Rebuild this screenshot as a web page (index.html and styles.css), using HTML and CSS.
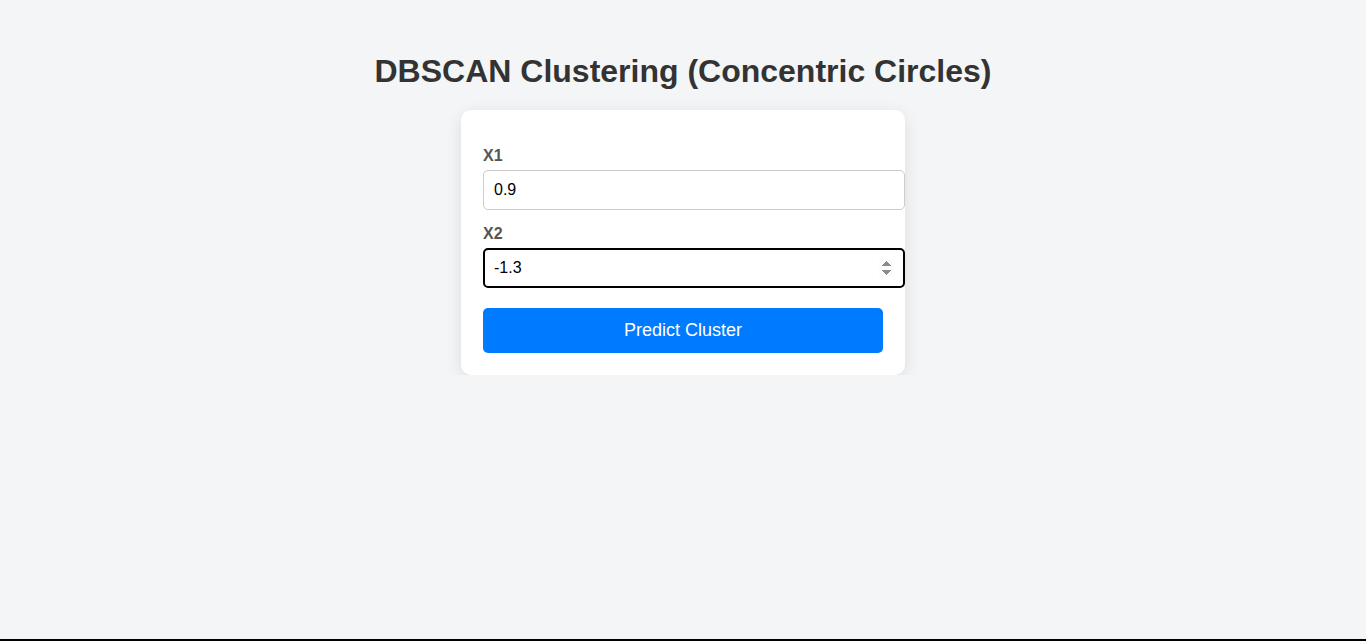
FILE: index.html
```html
<!DOCTYPE html>
<html lang="en">
<head>
<meta charset="utf-8">
<title>DBSCAN Clustering</title>
<link rel="stylesheet" href="styles.css">
</head>
<body>
<h1 class="title">DBSCAN Clustering (Concentric Circles)</h1>
<form class="card">
  <label class="field-label" for="x1">X1</label>
  <input class="field-input" id="x1" type="number" step="any" value="0.9">
  <label class="field-label" for="x2">X2</label>
  <input class="field-input" id="x2" type="number" step="any" value="-1.3" autofocus>
  <button class="submit" type="button">Predict Cluster</button>
</form>
<div class="bottom-edge"></div>
</body>
</html>
```
FILE: styles.css
```css
html, body {
  margin: 0;
  padding: 0;
}
body {
  background: #f4f5f7;
  font-family: "Liberation Sans", Arial, sans-serif;
  color: #333;
  padding-top: 32px;
}
.title {
  text-align: center;
  font-size: 32px;
  font-weight: bold;
  color: #333;
  margin: 21px 0 20px;
  line-height: 37px;
}
.card {
  width: 400px;
  margin: 0 auto;
  background: #fff;
  padding: 22px;
  border-radius: 10px;
  box-shadow: 0 4px 16px rgba(0, 0, 0, 0.1);
}
.field-label {
  display: block;
  font-weight: bold;
  font-size: 16px;
  line-height: 18px;
  color: #555;
  margin: 15px 0 5px;
}
.field-input {
  display: block;
  width: 400px;
  padding: 10px;
  font-size: 16px;
  line-height: 18px;
  font-family: "Liberation Sans", Arial, sans-serif;
  border: 1px solid #ccc;
  border-radius: 5px;
  color: #000;
  background: #fff;
  margin: 0;
}
.field-input:focus {
  outline: none;
  border: 2px solid #000;
  padding: 9px;
}
.submit {
  display: block;
  width: 400px;
  margin-top: 20px;
  padding: 12px;
  background: #007bff;
  color: #fff;
  border: none;
  border-radius: 5px;
  font-size: 18px;
  line-height: 21px;
  font-family: "Liberation Sans", Arial, sans-serif;
  cursor: pointer;
}
.bottom-edge {
  position: fixed;
  left: 0;
  right: 0;
  bottom: 0;
  height: 2px;
  background: #000;
}
```
